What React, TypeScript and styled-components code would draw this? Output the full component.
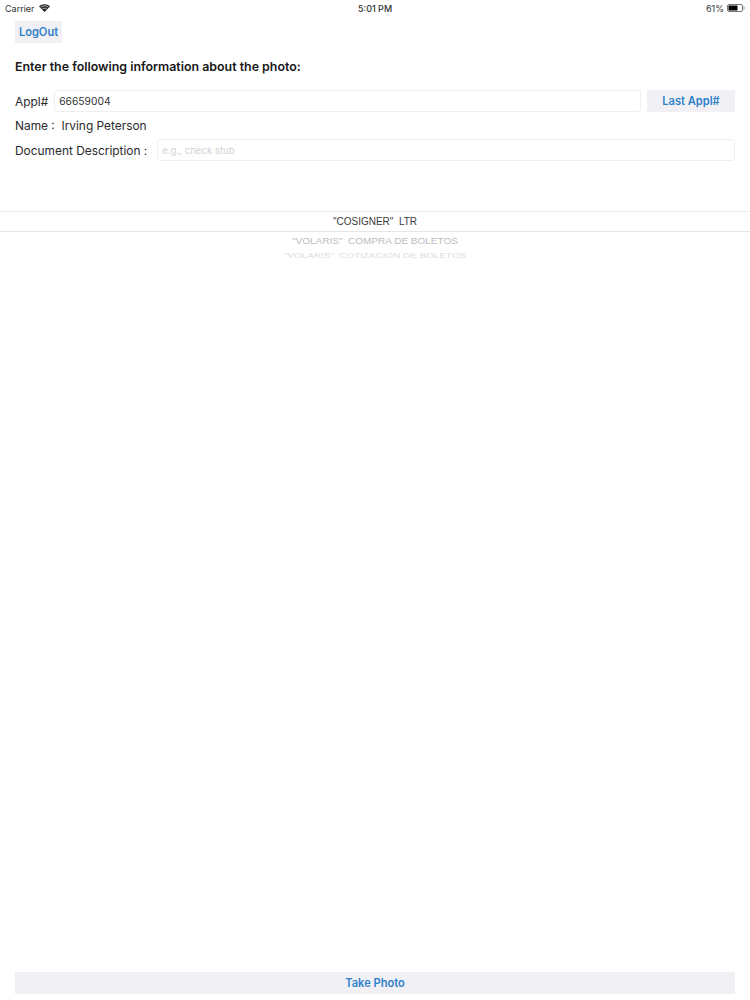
import React from "react";
import styled, { createGlobalStyle } from "styled-components";

const GlobalStyle = createGlobalStyle`
  html, body {
    margin: 0;
    padding: 0;
    background: #fff;
  }
`;

const Page = styled.div`
  width: 750px;
  height: 1000px;
  display: flex;
  flex-direction: column;
  overflow: hidden;
  font-family: "Inter", "Liberation Sans", sans-serif;
  color: #1c1c1e;
  background: #fff;
`;

const StatusBar = styled.div`
  height: 16px;
  padding: 0 5px;
  display: grid;
  grid-template-columns: 1fr auto 1fr;
  align-items: center;
  font-size: 9px;
  color: #333;
`;

const StatusLeft = styled.div`
  display: flex;
  align-items: center;
  gap: 4px;
`;

const StatusRight = styled.div`
  display: flex;
  justify-content: flex-end;
  align-items: center;
  gap: 3px;
`;

const Clock = styled.div`
  font-weight: 500;
`;

const Content = styled.div`
  padding: 5px 15px 0;
  display: flex;
  flex-direction: column;
  align-items: flex-start;
`;

const Button = styled.div<{ $wide?: boolean }>`
  height: 22px;
  display: flex;
  align-items: center;
  justify-content: center;
  background: #f1f1f5;
  color: #2f80c8;
  font-size: 11.1px;
  font-weight: 600;
  flex-shrink: 0;
  width: ${(p) => (p.$wide ? "88px" : "47px")};
`;

const Heading = styled.div`
  margin-top: 16px;
  font-size: 12.4px;
  line-height: 16px;
  font-weight: 600;
  color: #18181a;
`;

const Row = styled.div<{ $top: number }>`
  width: 100%;
  margin-top: ${(p) => p.$top}px;
  display: flex;
  align-items: center;
  font-size: 11.9px;
  line-height: 15px;
  color: #2a2a2c;
`;

const Label = styled.div<{ $gap: number }>`
  flex-shrink: 0;
  margin-right: ${(p) => p.$gap}px;
  white-space: pre;
`;

const Field = styled.div<{ $placeholder?: boolean }>`
  flex: 1;
  height: 22px;
  box-sizing: border-box;
  padding: 0 4px;
  display: flex;
  align-items: center;
  border: 1px solid #efeff2;
  border-radius: 3px;
  font-size: ${(p) => (p.$placeholder ? "9.6px" : "10.3px")};
  color: ${(p) => (p.$placeholder ? "#d2d2d6" : "#333")};
`;

const LastButton = styled(Button)`
  margin-left: 6px;
`;

const Picker = styled.div`
  margin-top: 50px;
  display: flex;
  flex-direction: column;
  align-items: center;
`;

const Selected = styled.div`
  width: 100%;
  height: 21px;
  box-sizing: border-box;
  border-top: 1px solid #ececee;
  border-bottom: 1px solid #e6e6e8;
  display: flex;
  align-items: center;
  justify-content: center;
  font-family: "Liberation Sans", sans-serif;
  font-size: 10px;
  color: #3a3a3c;
  white-space: pre;
`;

const Option = styled.div<{ $height: number; $size: number; $color: string; $squash: number }>`
  height: ${(p) => p.$height}px;
  display: flex;
  align-items: center;
  font-family: "Liberation Sans", sans-serif;
  font-size: ${(p) => p.$size}px;
  color: ${(p) => p.$color};
  white-space: pre;
  transform: scaleY(${(p) => p.$squash});
`;

const Spacer = styled.div`
  flex: 1;
`;

const Footer = styled.div`
  padding: 0 15px 6px;
`;

const PhotoButton = styled(Button)`
  width: 100%;
`;

const WifiIcon = () => (
  <svg width="11" height="8" viewBox="0 0 11 8">
    <path d="M5.5 8 L0 2.6 C3 -0.6 8 -0.6 11 2.6 Z" fill="#222" />
    <path d="M1.7 3.2 C3.8 1.4 7.2 1.4 9.3 3.2" stroke="#fff" strokeWidth="0.7" fill="none" />
    <path d="M3.2 5 C4.5 4 6.5 4 7.8 5" stroke="#fff" strokeWidth="0.7" fill="none" />
  </svg>
);

const BatteryIcon = () => (
  <svg width="18" height="8" viewBox="0 0 18 8">
    <rect x="0.5" y="0.5" width="15" height="7" rx="1.5" fill="#fff" stroke="#777" />
    <rect x="1.5" y="1.5" width="9" height="5" fill="#000" />
    <rect x="16.5" y="2.5" width="1" height="3" fill="#888" />
  </svg>
);

export default function App() {
  return (
    <Page>
      <GlobalStyle />
      <StatusBar>
        <StatusLeft>
          Carrier <WifiIcon />
        </StatusLeft>
        <Clock>5:01 PM</Clock>
        <StatusRight>
          61% <BatteryIcon />
        </StatusRight>
      </StatusBar>
      <Content>
        <Button>LogOut</Button>
        <Heading>Enter the following information about the photo:</Heading>
        <Row $top={15}>
          <Label $gap={6}>Appl#</Label>
          <Field>66659004</Field>
          <LastButton $wide>Last Appl#</LastButton>
        </Row>
        <Row $top={6}>
          <Label $gap={0}>Name :  Irving Peterson</Label>
        </Row>
        <Row $top={6}>
          <Label $gap={10}>Document Description :</Label>
          <Field $placeholder>e.g., check stub</Field>
        </Row>
      </Content>
      <Picker>
        <Selected>"COSIGNER"  LTR</Selected>
        <Option $height={17} $size={10} $color="#bcbcc0" $squash={0.92}>"VOLARIS"  COMPRA DE BOLETOS</Option>
        <Option $height={13} $size={9.9} $color="#dcdce0" $squash={0.78}>"VOLARIS"  COTIZACION DE BOLETOS</Option>
      </Picker>
      <Spacer />
      <Footer>
        <PhotoButton>Take Photo</PhotoButton>
      </Footer>
    </Page>
  );
}
